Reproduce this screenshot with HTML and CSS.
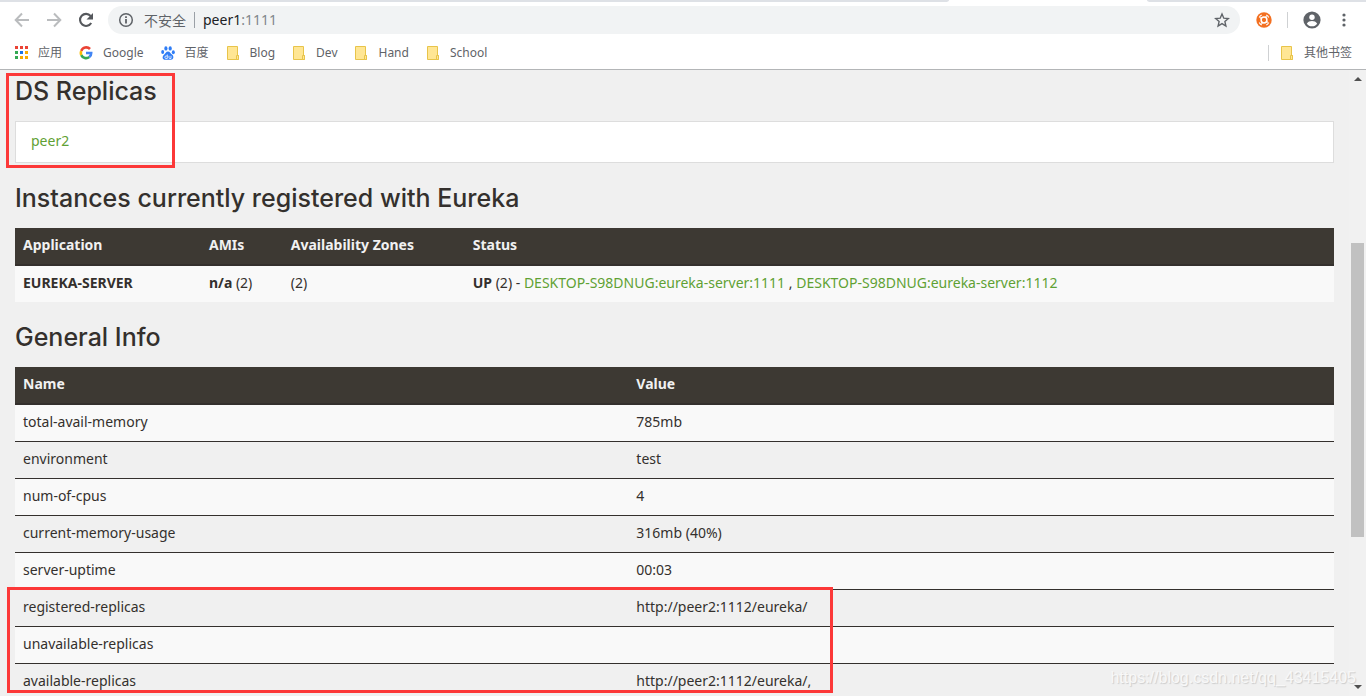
FILE: index.html
```html
<!DOCTYPE html>
<html lang="zh-CN">
<head>
<meta charset="utf-8">
<title>Eureka</title>
<link rel="stylesheet" href="styles.css">
</head>
<body>
<header class="chrome">
  <div class="tabstrip"><span class="tab-left"></span><span class="tab-right"></span></div>
  <div class="toolbar">
    <button class="icon-btn nav-btn" aria-label="Back"><svg width="16" height="16" viewBox="0 0 16 16" fill="none" stroke="#babcbe" stroke-width="2"><path d="M15 8H2M8 1.5L1.7 8L8 14.5"/></svg></button>
    <button class="icon-btn nav-btn" aria-label="Forward"><svg width="16" height="16" viewBox="0 0 16 16" fill="none" stroke="#babcbe" stroke-width="2"><path d="M1 8h13M8 1.5L14.3 8L8 14.5"/></svg></button>
    <button class="icon-btn nav-btn" aria-label="Reload"><svg width="16" height="16" viewBox="0 0 16 16"><path d="M13.2 11A6 6 0 1 1 12.6 4" fill="none" stroke="#55585c" stroke-width="2.1"/><path d="M15 1v6.5H8.5z" fill="#55585c"/></svg></button>
    <div class="omnibox">
      <svg width="16" height="16" viewBox="0 0 16 16"><circle cx="8" cy="8" r="6.3" fill="none" stroke="#5f6368" stroke-width="1.5"/><path d="M7.1 7h1.8v4.6H7.1zM7.1 4.3h1.8v1.7H7.1z" fill="#5f6368"/></svg>
      <span class="insecure">不安全</span>
      <span class="divider"></span>
      <span class="url">peer1<span class="port">:1111</span></span>
      <button class="icon-btn star" aria-label="Bookmark"><svg width="16" height="16" viewBox="0 0 16 16" fill="none" stroke="#5f6368" stroke-width="1.4"><path d="M8 2l1.8 4.2 4.5.4-3.4 3 1 4.4L8 11.6 4.1 14l1-4.4-3.400-3 4.500-.4z"/></svg></button>
    </div>
    <div class="tools">
      <button class="icon-btn" aria-label="Extension"><svg width="16" height="16" viewBox="0 0 16 16"><circle cx="8" cy="8" r="7.700" fill="#f37021"/><circle cx="8" cy="8" r="2.900" fill="none" stroke="#fff" stroke-width="1.500"/><path d="M5.500 5.500L4 6.200M10.500 5.500L9.800 4M10.500 10.500l1.500-.7M5.500 10.500l.7 1.500M3.300 5.500Q4 3.600 5.800 3M10.200 3q1.700.6 2.500 2.500M12.700 10.500q-.8 1.900-2.500 2.500M5.800 13q-1.800-.6-2.500-2.500" stroke="#fff" stroke-width="1.100" fill="none"/></svg></button>
      <span class="divider pale"></span>
      <button class="icon-btn" aria-label="Profile"><svg width="18" height="18" viewBox="0 0 18 18"><circle cx="9" cy="9" r="8.600" fill="#5f6368"/><circle cx="9" cy="6.300" r="2.700" fill="#fff"/><path d="M3.800 12.700c1-2 3.200-2.700 5.200-2.700s4.200.7 5.200 2.700c-1.200 1.700-3 2.600-5.200 2.600s-4-.9-5.200-2.600z" fill="#fff"/></svg></button>
      <button class="icon-btn" aria-label="Menu"><svg width="16" height="16" viewBox="0 0 16 16" fill="#5f6368"><circle cx="8" cy="3" r="1.600"/><circle cx="8" cy="8" r="1.600"/><circle cx="8" cy="13" r="1.600"/></svg></button>
    </div>
  </div>
  <nav class="bookmarks">
    <a class="bookmark" href="#"><svg width="14" height="14" viewBox="0 0 14 14"><path d="M0 0h3v3H0zM5 0h3v3H5zM10 0h3v3h-3z" fill="#ea4335"/><path d="M0 5h3v3H0zM0 10h3v3H0z" fill="#34a853"/><path d="M5 5h3v3H5z" fill="#1a73e8"/><path d="M10 5h3v3h-3zM5 10h3v3H5zM10 10h3v3h-3z" fill="#f9ab00"/></svg>应用</a>
    <a class="bookmark" href="#"><svg width="14" height="14" viewBox="0 0 14 14" fill="none" stroke-width="2.600"><path d="M11 3A5.200 5.200 0 0 0 2.300 4.900" stroke="#ea4335"/><path d="M2.300 4.900a5.200 5.200 0 0 0 0 4.200" stroke="#fbbc05"/><path d="M2.300 9.100A5.200 5.200 0 0 0 10.300 11" stroke="#34a853"/><path d="M10.300 11A5 5 0 0 0 12.200 7H7" stroke="#4285f4"/></svg>Google</a>
    <a class="bookmark" href="#"><svg width="14" height="14" viewBox="0 0 14 14" fill="#2f7df6"><ellipse cx="4.900" cy="2.400" rx="1.600" ry="2.200"/><ellipse cx="9.200" cy="2.400" rx="1.600" ry="2.200"/><ellipse cx="1.700" cy="6" rx="1.500" ry="2"/><ellipse cx="12.300" cy="6.200" rx="1.500" ry="2"/><path d="M7 5.400c2 0 2.600 2 4 3.200 2.600 2.300 1.100 5.400-1.200 5.200-2-.2-3.600-.2-5.600 0C1.800 14 .5 11 3 8.700 4.400 7.400 5 5.400 7 5.400z"/><path d="M6.300 8.500v4H5.100a1.200 1.200 0 0 1 0-2.500h1.200M8 9.800v2q0 .7.700.7H10V9.800" fill="none" stroke="#fff" stroke-width=".8"/></svg>百度</a>
    <a class="bookmark" href="#"><svg width="14" height="14" viewBox="0 0 14 14"><path class="folder" d="M1.500.5h10v9h1v4h-11z"/><path class="folder" d="M10.500 9.500h2v4h-2z"/></svg>Blog</a>
    <a class="bookmark" href="#"><svg width="14" height="14" viewBox="0 0 14 14"><path class="folder" d="M1.500.5h10v9h1v4h-11z"/><path class="folder" d="M10.500 9.500h2v4h-2z"/></svg>Dev</a>
    <a class="bookmark" href="#"><svg width="14" height="14" viewBox="0 0 14 14"><path class="folder" d="M1.500.5h10v9h1v4h-11z"/><path class="folder" d="M10.500 9.500h2v4h-2z"/></svg>Hand</a>
    <a class="bookmark" href="#"><svg width="14" height="14" viewBox="0 0 14 14"><path class="folder" d="M1.500.5h10v9h1v4h-11z"/><path class="folder" d="M10.500 9.500h2v4h-2z"/></svg>School</a>
    <span class="divider pale push"></span>
    <a class="bookmark" href="#"><svg width="14" height="14" viewBox="0 0 14 14"><path class="folder" d="M1.500.5h10v9h1v4h-11z"/><path class="folder" d="M10.500 9.500h2v4h-2z"/></svg>其他书签</a>
  </nav>
</header>
<div class="viewport">
  <main class="page">
    <h1>DS Replicas</h1>
    <div class="well"><a href="#">peer2</a></div>
    <h1>Instances currently registered with Eureka</h1>
    <table class="instances">
      <colgroup><col class="c-app"><col class="c-ami"><col class="c-zone"><col></colgroup>
      <thead><tr><th>Application</th><th>AMIs</th><th>Availability Zones</th><th>Status</th></tr></thead>
      <tbody><tr><td><b>EUREKA-SERVER</b></td><td><b>n/a</b> (2)</td><td>(2)</td><td><b>UP</b> (2) - <a href="#">DESKTOP-S98DNUG:eureka-server:1111</a> , <a href="#">DESKTOP-S98DNUG:eureka-server:1112</a></td></tr></tbody>
    </table>
    <h1>General Info</h1>
    <table class="general">
      <colgroup><col class="c-name"><col></colgroup>
      <thead><tr><th>Name</th><th>Value</th></tr></thead>
      <tbody>
        <tr><td>total-avail-memory</td><td>785mb</td></tr>
        <tr><td>environment</td><td>test</td></tr>
        <tr><td>num-of-cpus</td><td>4</td></tr>
        <tr><td>current-memory-usage</td><td>316mb (40%)</td></tr>
        <tr><td>server-uptime</td><td>00:03</td></tr>
        <tr><td>registered-replicas</td><td>http://peer2:1112/eureka/</td></tr>
        <tr><td>unavailable-replicas</td><td></td></tr>
        <tr><td>available-replicas</td><td>http://peer2:1112/eureka/,</td></tr>
      </tbody>
    </table>
  </main>
  <div class="scrollbar"><span class="arrow up"></span><span class="thumb"></span><span class="arrow down"></span></div>
  <div class="mark mark-top"></div>
  <div class="mark mark-bottom"></div>
  <div class="watermark">https://blog.csdn.net/qq_43415405</div>
</div>
</body>
</html>
```

FILE: styles.css
```css
* { box-sizing: border-box; }
body {
  margin: 0;
  height: 100vh;
  display: flex;
  flex-direction: column;
  overflow: hidden;
  background: #f0f0f0;
  color: #34302d;
  font: 14px/20px "Noto Sans", "Noto Sans CJK SC", sans-serif;
}
a { color: #5fa134; text-decoration: none; }
.chrome { flex: none; background: #fff; border-bottom: 1px solid #b3b5b7; }
.tabstrip { display: flex; justify-content: space-between; height: 2px; }
.tab-left, .tab-right { background: #dee1e6; }
.tab-left { width: 69.5%; border-bottom-right-radius: 4px 2px; }
.tab-right { width: 16%; border-bottom-left-radius: 4px 2px; }
.toolbar { display: flex; align-items: center; height: 36px; padding: 0 14px; }
.icon-btn { display: flex; padding: 0; border: 0; background: none; }
.nav-btn { margin-right: 16px; }
.omnibox {
  flex: 1;
  display: flex;
  align-items: center;
  height: 28px;
  margin-left: -2px;
  padding: 0 10px;
  border-radius: 14px;
  background: #f1f3f4;
}
.insecure { margin: 0 8px 0 10px; color: #5f6368; font-family: "Noto Sans CJK SC", sans-serif; }
.divider { width: 1px; height: 16px; background: #9aa0a6; }
.pale { background: #cfd1d3; }
.url { margin-left: 8px; color: #202124; }
.port { color: #80868b; }
.star { margin-left: auto; }
.tools { display: flex; align-items: center; gap: 15px; margin-left: 16px; }
.bookmarks { display: flex; align-items: center; gap: 17px; height: 31px; padding: 0 14px 1px 15px; font-size: 12px; }
.bookmark { display: flex; align-items: center; gap: 10px; color: #5f6368; }
.bookmark:first-child { gap: 9px; }
.push { margin-left: auto; margin-right: -6px; }
.folder { fill: #ffe694; stroke: #e8c44a; }

.viewport { position: relative; flex: 1; min-height: 0; display: flex; overflow: hidden; }
.page { flex: 1; padding: 6px 15px 0; }
h1 { margin: 20px 0 15px; font: 500 25px/30px Inter, sans-serif; }
h1:first-child { margin-top: 0; }
.well { padding: 9px 15px 11px; border: 1px solid #ddd; background: #fff; }
table { width: 100%; table-layout: fixed; border-collapse: separate; border-spacing: 0; }
th, td { height: 36px; padding: 7px 8px 9px; text-align: left; line-height: 20px; white-space: nowrap; }
th { height: 38px; border-bottom: 2px solid #34302d; background: #3d3933; color: #f1f1f1; }
tbody tr:nth-child(odd) { background: #f9f9f9; }
.general td { height: 37px; border-bottom: 1px solid #34302d; }
.c-app { width: 14.1%; }
.c-ami { width: 6.2%; }
.c-zone { width: 13.8%; }
.c-name { width: 46.5%; }

.scrollbar { display: flex; flex-direction: column; align-items: center; width: 17px; padding: 7px 2px; background: #f1f1f1; }
.thumb { width: 13px; height: 48%; margin-top: 162px; background: #c1c1c1; }
.arrow { border: 4px solid transparent; }
.up { border-top: 0; border-bottom-color: #505050; }
.down { margin-top: auto; border-bottom: 0; border-top-color: #505050; }

.mark { position: absolute; border: 3px solid #fc3838; }
.mark-top { left: 6px; top: 3px; width: 169px; height: 95px; }
.mark-bottom { left: 7px; top: 517px; width: 826px; height: 106px; }
.watermark {
  position: absolute;
  right: 10px;
  bottom: 8px;
  color: #f8f8f8;
  font: 16px/20px "Liberation Sans", sans-serif;
  text-shadow: 1px 1px 1px #ccc;
}
```
